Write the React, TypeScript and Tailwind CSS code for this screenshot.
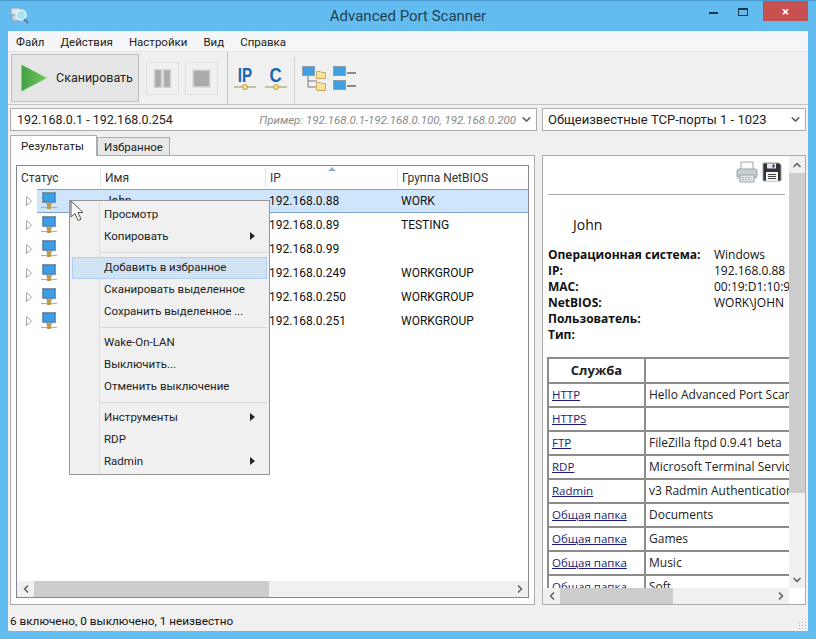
import { ChevronDown, ChevronLeft, ChevronRight, ChevronUp } from "lucide-react";

const menu = ["Файл", "Действия", "Настройки", "Вид", "Справка"];

const hosts = [
  { name: "John", ip: "192.168.0.88", group: "WORK" },
  { name: "", ip: "192.168.0.89", group: "TESTING" },
  { name: "", ip: "192.168.0.99", group: "" },
  { name: "", ip: "192.168.0.249", group: "WORKGROUP" },
  { name: "", ip: "192.168.0.250", group: "WORKGROUP" },
  { name: "", ip: "192.168.0.251", group: "WORKGROUP" },
];

const info = [
  ["Операционная система:", "Windows"],
  ["IP:", "192.168.0.88"],
  ["MAC:", "00:19:D1:10:9"],
  ["NetBIOS:", "WORK\\JOHN"],
  ["Пользователь:", ""],
  ["Тип:", ""],
];

const services = [
  ["HTTP", "Hello Advanced Port Scanner"],
  ["HTTPS", ""],
  ["FTP", "FileZilla ftpd 0.9.41 beta"],
  ["RDP", "Microsoft Terminal Services"],
  ["Radmin", "v3 Radmin Authentication"],
  ["Общая папка", "Documents"],
  ["Общая папка", "Games"],
  ["Общая папка", "Music"],
  ["Общая папка", "Soft"],
];

const contextMenu = [
  [{ label: "Просмотр" }, { label: "Копировать", sub: true }],
  [{ label: "Добавить в избранное", active: true }, { label: "Сканировать выделенное" }, { label: "Сохранить выделенное ..." }],
  [{ label: "Wake-On-LAN" }, { label: "Выключить..." }, { label: "Отменить выключение" }],
  [{ label: "Инструменты", sub: true }, { label: "RDP" }, { label: "Radmin", sub: true }],
];

const AppIcon = () => (
  <svg width="20" height="20" viewBox="0 0 20 20">
    <rect x="2" y="3" width="9" height="7" fill="#d8e6ee" stroke="#8aa0ae" />
    <rect x="3" y="10" width="6" height="6" fill="#c4d4de" stroke="#8aa0ae" />
    <circle cx="12" cy="10" r="5" fill="#a8e0f4" stroke="#e8f6fc" strokeWidth="1.5" />
    <path d="M15 14l4 4" stroke="#5d7f91" strokeWidth="2" />
  </svg>
);

const HostIcon = () => (
  <svg width="16" height="20" viewBox="0 0 16 20" className="shrink-0">
    <rect x="1.5" y="1.5" width="13" height="10" fill="#2f8fdc" stroke="#7f96a8" />
    <rect x="3" y="3" width="10" height="7" fill="#3d9fe8" />
    <rect x="5" y="12" width="6" height="1.5" fill="#9aa8b2" />
    <path d="M0 16.5h16" stroke="#b6b68c" strokeWidth="1.2" />
    <rect x="6" y="13" width="4" height="5" fill="#b99a4e" />
  </svg>
);

const PlayIcon = () => (
  <svg width="30" height="30" viewBox="0 0 30 30">
    <defs>
      <linearGradient id="play" x1="0" y1="0" x2="1" y2="0">
        <stop offset="0" stopColor="#3f9f45" />
        <stop offset="1" stopColor="#79c95f" />
      </linearGradient>
    </defs>
    <path d="M1 1l27 14L1 29z" fill="url(#play)" stroke="#dcebd8" strokeWidth="1" />
  </svg>
);

const PauseIcon = () => (
  <svg width="19" height="19" viewBox="0 0 19 19">
    <rect x="1.5" y="0.5" width="7" height="18" fill="#ababab" stroke="#d2d2d2" strokeWidth="1.5" />
    <rect x="10.5" y="0.5" width="7" height="18" fill="#ababab" stroke="#d2d2d2" strokeWidth="1.5" />
  </svg>
);

const StopIcon = () => (
  <svg width="19" height="19" viewBox="0 0 19 19">
    <rect x="1" y="1" width="17" height="17" fill="#ababab" stroke="#d8d8d8" strokeWidth="1.5" />
  </svg>
);

const TreeIcon = () => (
  <svg width="25" height="25" viewBox="0 0 25 25">
    <path d="M6 10v11h9M6 15h9" fill="none" stroke="#777" />
    <rect x="0.5" y="0.5" width="12" height="9" fill="#3f9fe0" stroke="#8aa0ae" />
    <path d="M14.5 8.5v-3h4l1 1h4v6h-9z" fill="#f8e2a0" stroke="#c9a860" />
    <path d="M14.5 20.5v-4h4l1 1h4v7h-9z" fill="#f8e2a0" stroke="#c9a860" />
  </svg>
);

const ListIcon = () => (
  <svg width="24" height="25" viewBox="0 0 24 25">
    <rect x="0.5" y="0.5" width="12" height="9" fill="#3f9fe0" stroke="#8aa0ae" />
    <rect x="0.5" y="14.5" width="12" height="9" fill="#3f9fe0" stroke="#8aa0ae" />
    <path d="M14 7h9M14 20h9" stroke="#8a8a8a" strokeWidth="2" />
  </svg>
);

const NetBar = () => (
  <svg width="22" height="6" viewBox="0 0 22 6" className="block">
    <path d="M0 3h22" stroke="#b8b28a" strokeWidth="1.5" />
    <circle cx="11" cy="3" r="2.5" fill="#f6e27c" stroke="#b9a14e" />
  </svg>
);

const PrinterIcon = () => (
  <svg width="22" height="22" viewBox="0 0 22 22">
    <rect x="5" y="1" width="12" height="8" fill="#fafafa" stroke="#a8a8a8" />
    <rect x="1" y="8" width="20" height="9" rx="2" fill="#c6ced2" stroke="#9aa4a8" />
    <rect x="4" y="14" width="14" height="7" fill="#e4e8ea" stroke="#9aa4a8" />
    <path d="M6 16.5h10M6 18.5h10" stroke="#a8b0b4" strokeDasharray="2 1" />
  </svg>
);

const FloppyIcon = () => (
  <svg width="20" height="20" viewBox="0 0 20 20">
    <path d="M1 2a1 1 0 011-1h15l2 2v15a1 1 0 01-1 1H2a1 1 0 01-1-1z" fill="#2d3338" stroke="#9aa0a4" />
    <rect x="5" y="1.5" width="9" height="5" fill="#e8e8e8" />
    <rect x="10.5" y="2.5" width="2" height="3" fill="#2d3338" />
    <rect x="4" y="10" width="12" height="9" fill="#f2f2f2" />
    <path d="M6 12.5h8M6 14.5h8M6 16.5h8" stroke="#444" />
  </svg>
);

const Cursor = () => (
  <svg width="14" height="22" viewBox="0 0 14 22">
    <path d="M1 1v16l4-3.5 3 7 3-1.3-3-6.7h5z" fill="#fff" stroke="#555" strokeWidth="1" strokeLinejoin="round" />
  </svg>
);

const Expander = () => (
  <svg width="6" height="10" viewBox="0 0 6 10" className="block">
    <path d="M0.5 0.5l5 4.5-5 4.5z" fill="#fff" stroke="#a6a6a6" />
  </svg>
);

const SubArrow = () => <span className="h-0 w-0 border-y-[4px] border-l-[5px] border-y-transparent border-l-[#222]" />;

const HBar = ({ thumb }: { thumb: string }) => (
  <div className="flex h-[16px] shrink-0 items-center bg-[#f0f0f0] text-[#666]">
    <div className="flex w-[17px] justify-center">
      <ChevronLeft size={12} strokeWidth={3.5} />
    </div>
    <div className="flex h-full flex-1">
      <div className={`${thumb} h-full bg-[#cdcdcd]`} />
    </div>
    <div className="flex w-[17px] justify-center">
      <ChevronRight size={12} strokeWidth={3.5} />
    </div>
  </div>
);

function ScanList() {
  return (
    <div className="flex h-[433px] flex-col border border-[#828790] bg-white">
      <div className="relative flex h-[23px] shrink-0 items-center whitespace-nowrap text-[#333]">
        <div className="w-[84px] border-r border-[#e5e5e5] pl-[4px] leading-[20px]">Статус</div>
        <div className="w-[165px] border-r border-[#e5e5e5] pl-[4px] leading-[20px]">Имя</div>
        <div className="w-[132px] border-r border-[#e5e5e5] pl-[4px] leading-[20px]">IP</div>
        <div className="flex-1 pl-[4px] leading-[20px]">Группа NetBIOS</div>
        <svg width="8" height="4" viewBox="0 0 8 4" className="absolute left-[311px] top-[1px]">
          <path d="M4 0l4 4H0z" fill="#8fb0cc" />
        </svg>
      </div>
      <div className="flex-1 overflow-hidden">
        {hosts.map((h, i) => (
          <div key={h.ip} className="flex h-[24px] items-center text-[#111]">
            <div className="flex w-[20px] justify-end pr-[5px]">
              <Expander />
            </div>
            <div
              className={`flex h-full flex-1 items-center border-y ${
                i === 0 ? "border-[#7da2ce] bg-[#cfe5fb]" : "border-transparent"
              }`}
            >
              <div className="flex w-[68px] pl-[4px]">
                <HostIcon />
              </div>
              <div className="w-[164px]">{h.name}</div>
              <div className="w-[132px]">{h.ip}</div>
              <div>{h.group}</div>
            </div>
          </div>
        ))}
      </div>
      <HBar thumb="w-[235px]" />
    </div>
  );
}

function ContextMenu() {
  return (
    <div className="absolute left-[69px] top-[199px] w-[201px] whitespace-nowrap border border-[#979797] bg-[#f0f0f0] pb-[1px] pt-[3px] text-[11.5px] text-[#222]">
      <div className="absolute bottom-[1px] left-[29px] top-[1px] w-px bg-[#dcdcdc]" />
      {contextMenu.map((group, g) => (
        <div key={g}>
          {g > 0 && (
            <div className="flex h-[9px] items-center pl-[30px] pr-[2px]">
              <div className="h-px w-full bg-[#d7d7d7]" />
            </div>
          )}
          {group.map((it) => (
            <div
              key={it.label}
              className={`relative mx-[2px] flex h-[22px] items-center justify-between border pb-[3px] pl-[31px] pr-[11px] ${
                "active" in it ? "border-[#aecff7] bg-[#d1e2f2]" : "border-transparent"
              }`}
            >
              <span>{it.label}</span>
              {"sub" in it && <SubArrow />}
            </div>
          ))}
        </div>
      ))}
    </div>
  );
}

function Details() {
  return (
    <div className="flex h-[450px] flex-col border border-[#acacac] bg-white font-['Open_Sans',sans-serif]">
      <div className="flex min-h-0 flex-1">
        <div className="relative min-w-0 flex-1 overflow-hidden">
          <div className="mx-[5px] mr-[4px] flex h-[39px] items-center justify-end gap-[4px] border-b border-[#a8a8a8] pb-[11px] pr-[3px] pt-[5px]">
            <PrinterIcon />
            <FloppyIcon />
          </div>
          <div className="pl-[30px] pt-[20px] text-[14px] leading-[20px] text-[#111]">John</div>
          <div className="mt-[12px] pl-[5px]">
            {info.map(([k, v]) => (
              <div key={k} className="flex h-[16px] items-center whitespace-nowrap leading-[16px] text-[#111]">
                <div className="w-[166px] shrink-0 font-bold">{k}</div>
                <div>{v}</div>
              </div>
            ))}
          </div>
          <div className="ml-[4px] mt-[14px] w-[300px] border-l-2 border-t-2 border-[#8c8c8c]">
            <div className="flex h-[25px] border-b-2 border-[#8c8c8c]">
              <div className="flex w-[97px] shrink-0 items-center justify-center border-r-2 border-[#8c8c8c] pb-[2px] text-[13px] font-bold">Служба</div>
              <div className="flex-1" />
            </div>
            {services.map(([s, d], i) => (
              <div key={i} className="flex h-[24px] border-b-2 border-[#8c8c8c]">
                <div className="flex w-[97px] shrink-0 items-center border-r-2 border-[#8c8c8c] pl-[2px] text-[11.5px]">
                  <a className="pl-px text-[#1a1a78] underline">{s}</a>
                </div>
                <div className="flex items-center whitespace-nowrap pl-[3px] text-[#222]">{d}</div>
              </div>
            ))}
          </div>
        </div>
        <div className="flex w-[16px] shrink-0 flex-col bg-[#f0f0f0] text-[#666]">
          <div className="flex h-[17px] items-center justify-center">
            <ChevronUp size={12} strokeWidth={3.5} />
          </div>
          <div className="flex-1">
            <div className="h-[320px] bg-[#cdcdcd]" />
          </div>
          <div className="flex h-[17px] items-center justify-center">
            <ChevronDown size={12} strokeWidth={3.5} />
          </div>
        </div>
      </div>
      <div className="pr-[16px]">
        <HBar thumb="w-[113px]" />
      </div>
    </div>
  );
}

export default function App() {
  return (
    <div className="relative flex h-[639px] w-[816px] flex-col overflow-hidden border-t border-[#4a9bd0] bg-[#62bcf0] font-['Roboto','Noto_Sans',sans-serif] text-[12px] leading-[16px]">
      <div className="relative flex h-[30px] shrink-0 items-center justify-center text-[15px] text-[#24404f]">
        <div className="absolute left-[9px] top-[4px]">
          <AppIcon />
        </div>
        <span>Advanced Port Scanner</span>
        <div className="absolute right-[8px] top-0 flex h-[20px] items-start">
          <div className="flex h-[20px] w-[28px] items-center justify-center pt-[4px]">
            <div className="h-[2px] w-[9px] bg-[#1d3a4c]" />
          </div>
          <div className="flex h-[20px] w-[32px] items-start justify-center pt-[7px]">
            <div className="h-[8px] w-[10px] border border-t-2 border-[#1d3a4c]" />
          </div>
          <div className="ml-[4px] flex h-[20px] w-[45px] items-center justify-center bg-[#c75050] text-[13px] font-bold leading-none text-white">
            ×
          </div>
        </div>
      </div>

      <div className="mx-[8px] flex h-[600px] flex-col bg-[#f0f0f0] text-[#222]">
        <div className="flex h-[21px] shrink-0 items-center gap-[16px] border-b border-[#e4e4e4] bg-[#f5f6f7] pl-[8px] pt-[2px] text-[11.5px]">
          {menu.map((m) => (
            <span key={m}>{m}</span>
          ))}
        </div>

        <div className="flex h-[53px] shrink-0 items-center border-b border-[#c4c4c4]">
          <div className="ml-[3px] flex h-[48px] w-[128px] items-center gap-[6px] border border-[#bdbdbd] bg-[#e5e5e5] pl-[8px] text-[12.5px]">
            <PlayIcon />
            <span>Сканировать</span>
          </div>
          <div className="ml-[7px] flex h-[33px] w-[33px] items-center justify-center border border-[#e0e0e0]">
            <PauseIcon />
          </div>
          <div className="ml-[6px] flex h-[33px] w-[33px] items-center justify-center border border-[#e0e0e0]">
            <StopIcon />
          </div>
          <div className="ml-[9px] h-full w-px bg-[#c4c4c4]" />
          <div className="ml-[6px] flex w-[22px] flex-col items-center">
            <span className="block h-[18px] scale-x-[0.72] font-['Liberation_Sans',sans-serif] text-[21px] font-bold leading-[18px] text-[#1565b0]">IP</span>
            <NetBar />
          </div>
          <div className="ml-[9px] flex w-[22px] flex-col items-center">
            <span className="block h-[18px] scale-x-[0.8] font-['Liberation_Sans',sans-serif] text-[21px] font-bold leading-[18px] text-[#1565b0]">C</span>
            <NetBar />
          </div>
          <div className="ml-[7px] h-[47px] w-px self-end bg-[#d4d4d4]" />
          <div className="ml-[7px]">
            <TreeIcon />
          </div>
          <div className="ml-[6px]">
            <ListIcon />
          </div>
        </div>

        <div className="mt-[3px] flex h-[23px] shrink-0 gap-[5px] px-[2px]">
          <div className="flex w-[527px] shrink-0 items-center border border-[#acacac] bg-white pl-[6px] pr-[3px] text-[12.5px] text-[#222]">
            <span>192.168.0.1 - 192.168.0.254</span>
            <span className="ml-auto text-[11.5px] italic text-[#8a8a8a]">Пример: 192.168.0.1-192.168.0.100, 192.168.0.200</span>
            <ChevronDown size={13} strokeWidth={3} className="ml-[4px] text-[#666]" />
          </div>
          <div className="flex min-w-0 flex-1 items-center justify-between border border-[#acacac] bg-white pl-[5px] pr-[3px] text-[13px]">
            <span>Общеизвестные TCP-порты 1 - 1023</span>
            <ChevronDown size={13} strokeWidth={3} className="text-[#666]" />
          </div>
        </div>

        <div className="flex flex-1 gap-[7px] px-[2px]">
          <div className="w-[525px] shrink-0">
            <div className="mt-[4px] flex h-[20px] items-end text-[11.5px]">
              <div className="relative -mb-px flex h-[21px] w-[87px] items-center border border-b-0 border-[#acacac] bg-white pl-[10px] pr-[4px]">Результаты</div>
              <div className="flex h-[18px] w-[73px] items-center justify-center border border-b-0 border-[#acacac] bg-[#e8e8e8]">Избранное</div>
            </div>
            <div className="h-[450px] border border-[#acacac] bg-white px-[5px] pt-[9px]">
              <ScanList />
            </div>
          </div>
          <div className="min-w-0 flex-1 pt-[24px]">
            <Details />
          </div>
        </div>

        <div className="relative flex h-[26px] shrink-0 items-center pl-[2px] pt-[5px] text-[11.75px] text-[#111]">
          6 включено, 0 выключено, 1 неизвестно
          <div className="absolute bottom-[2px] right-[2px] h-[8px] w-[8px] bg-[radial-gradient(#b0b0b0_1px,transparent_1px)] bg-[length:3px_3px]" />
        </div>
      </div>

      <ContextMenu />
      <div className="absolute left-[70px] top-[199px]">
        <Cursor />
      </div>
    </div>
  );
}
